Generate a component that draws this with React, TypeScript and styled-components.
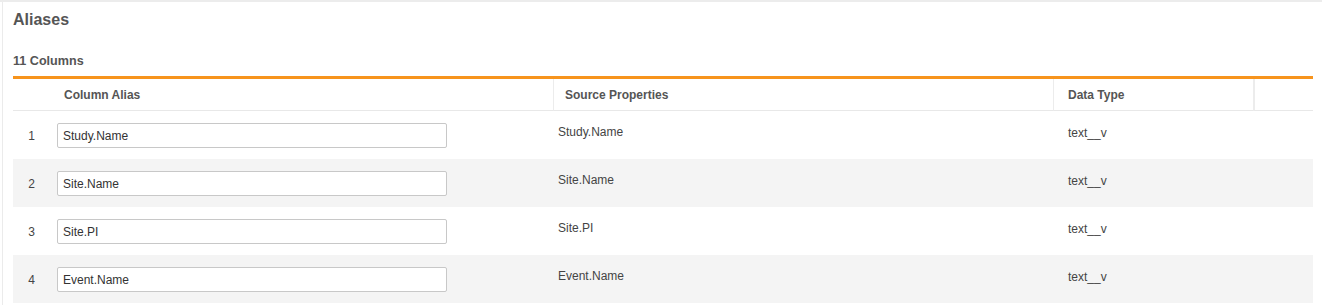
import React from "react";
import styled, { createGlobalStyle } from "styled-components";

const Global = createGlobalStyle`
  html, body { margin: 0; padding: 0; background: #fff; }
  body { font-family: "Liberation Sans", Arial, Helvetica, sans-serif; color: #333; }
`;

const Page = styled.div`
  width: 1322px;
  height: 305px;
  box-sizing: border-box;
  border-top: 2px solid #ececec;
  display: flex;
  overflow: hidden;
`;

const Gutter = styled.div`
  width: 2px;
  flex: none;
  background: #fff;
  border-right: 1px solid #ebebeb;
`;

const Panel = styled.div`
  flex: 1;
  padding: 8px 9px 0 10px;
  display: flex;
  flex-direction: column;
`;

const Title = styled.h2`
  margin: 0;
  font-size: 16px;
  line-height: 20px;
  font-weight: 700;
  color: #555;
`;

const Count = styled.div`
  margin-top: 23px;
  font-size: 12.6px;
  line-height: 16px;
  font-weight: 700;
  color: #555;
  padding-bottom: 7px;
  border-bottom: 3px solid #f7941d;
`;

const Grid = styled.div`
  display: grid;
  grid-template-columns: 37px 503px 500px 200px 60px;
`;

const HeadCell = styled.div<{ $pad?: number; $divider?: number }>`
  height: 31px;
  border-bottom: 1px solid #e8e8e8;
  border-left: ${(p) => (p.$divider ? `${p.$divider}px solid #ececec` : "none")};
  box-sizing: content-box;
  display: flex;
  align-items: center;
  padding-left: ${(p) => p.$pad ?? 0}px;
  font-size: 12px;
  font-weight: 700;
  color: #555;
`;

const Row = styled.div<{ $alt: boolean }>`
  display: contents;
  & > div {
    background: ${(p) => (p.$alt ? "#f4f4f4" : "#fff")};
  }
`;

const NumCell = styled.div`
  height: 48px;
  display: flex;
  align-items: center;
  justify-content: center;
  font-size: 12px;
  color: #444;
  padding-top: 2px;
  box-sizing: border-box;
`;

const InputCell = styled.div`
  height: 48px;
  display: flex;
  align-items: center;
  padding-left: 7px;
  padding-top: 1px;
  box-sizing: border-box;
`;

const AliasInput = styled.input`
  width: 390px;
  height: 25px;
  box-sizing: border-box;
  border: 1px solid #c8c8c8;
  border-radius: 2px;
  padding: 0 5px;
  font-family: inherit;
  font-size: 12px;
  color: #333;
  background: #fff;
  outline: none;
`;

const TextCell = styled.div<{ $pad: number; $top: number }>`
  height: 48px;
  box-sizing: border-box;
  padding-left: ${(p) => p.$pad}px;
  padding-top: ${(p) => p.$top}px;
  font-size: 12px;
  line-height: 14px;
  color: #444;
`;

const EmptyCell = styled.div`
  height: 48px;
`;

const rows = [
  { alias: "Study.Name", source: "Study.Name", type: "text__v" },
  { alias: "Site.Name", source: "Site.Name", type: "text__v" },
  { alias: "Site.PI", source: "Site.PI", type: "text__v" },
  { alias: "Event.Name", source: "Event.Name", type: "text__v" },
];

export default function App() {
  return (
    <>
      <Global />
      <Page>
        <Gutter />
        <Panel>
          <Title>Aliases</Title>
          <Count>11 Columns</Count>
          <Grid>
            <HeadCell />
            <HeadCell $pad={14}>Column Alias</HeadCell>
            <HeadCell $pad={11} $divider={1}>Source Properties</HeadCell>
            <HeadCell $pad={14} $divider={1}>Data Type</HeadCell>
            <HeadCell $divider={2} />
            {rows.map((r, i) => (
              <Row key={i} $alt={i % 2 === 1}>
                <NumCell>{i + 1}</NumCell>
                <InputCell>
                  <AliasInput defaultValue={r.alias} />
                </InputCell>
                <TextCell $pad={5} $top={14}>{r.source}</TextCell>
                <TextCell $pad={15} $top={15}>{r.type}</TextCell>
                <EmptyCell />
              </Row>
            ))}
          </Grid>
        </Panel>
      </Page>
    </>
  );
}
